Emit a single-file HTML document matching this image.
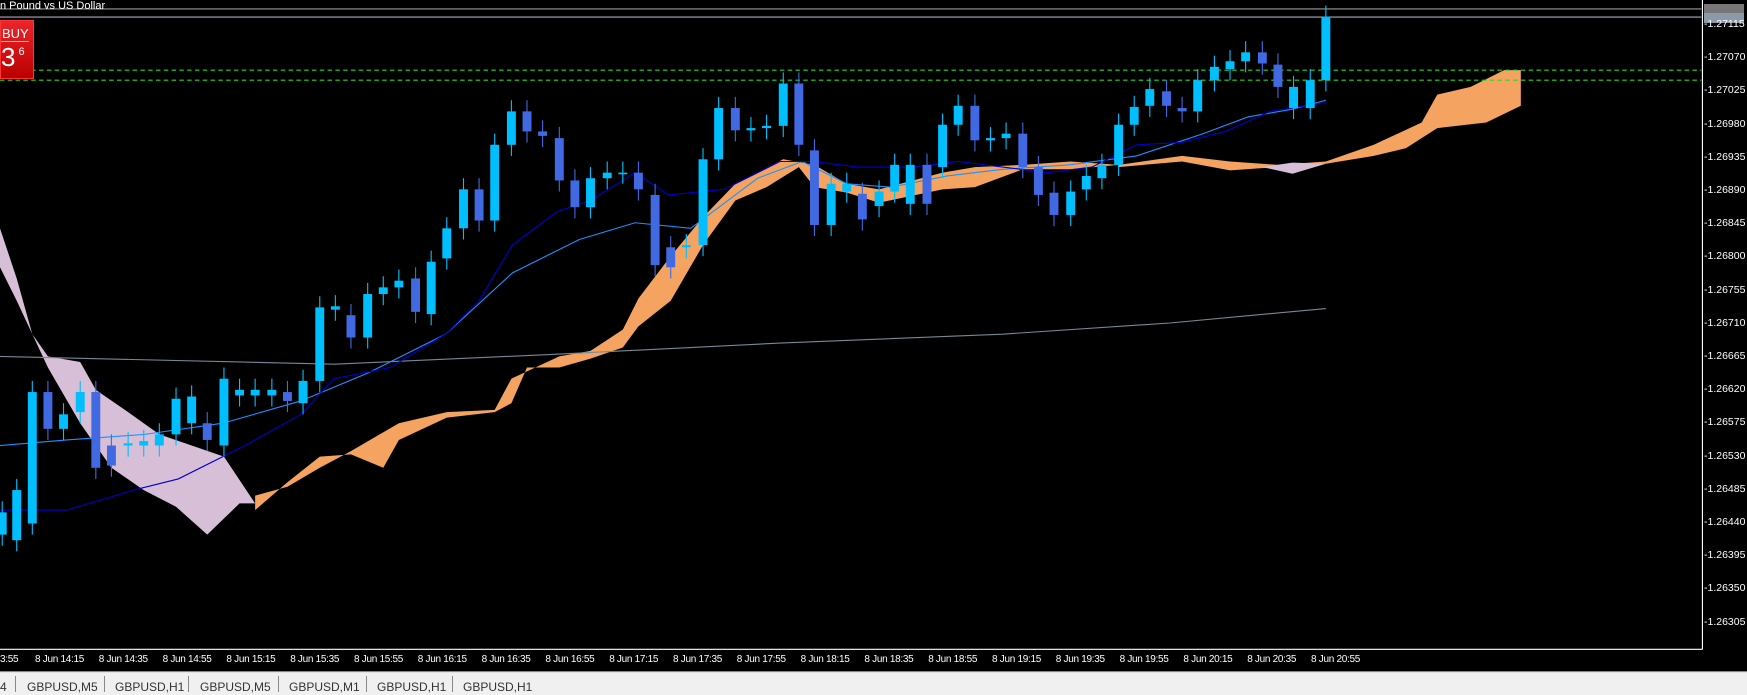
<!DOCTYPE html><html><head><style>
body{margin:0;width:1747px;height:695px;background:#000;overflow:hidden;position:relative;font-family:"Liberation Sans",sans-serif}
.t{position:absolute;color:#fff;font-size:10px;white-space:nowrap;letter-spacing:-0.3px}
.p{position:absolute;left:1704px;color:#fff;font-size:10.5px}
.tab{position:absolute;top:680px;font-size:12px;color:#333}
.sep{position:absolute;top:676px;width:1px;height:16px;background:#888}
</style></head><body>
<svg id="s" width="1747" height="695" viewBox="0 0 1568 624" preserveAspectRatio="none" style="position:absolute;left:0;top:0">
<polygon fill="#d8bfd8" points="0,205 15,250 29,300 43,320 72,325 86,350 115,370 143,390 172,400 201,410 229,452 215,452 186,480 158,455 129,440 100,420 72,380 43,330 15,270 0,240"/>
<polygon fill="#f4a460" points="229,445 258,437 287,420 315,405 358,380 401,370 444,368 459,340 502,320 530,315 559,296 573,268 602,230 631,195 660,165 703,143 731,148 760,165 789,170 846,155 875,150 918,148 961,145 1004,148 961,152 918,152 875,168 846,170 789,182 760,173 731,168 717,150 688,168 660,180 631,220 602,270 573,293 559,312 530,322 502,330 473,330 459,362 444,370 401,375 358,395 344,420 315,408 287,410 258,433 229,458"/>
<polygon fill="#f4a460" points="1004,148 1061,140 1104,145 1147,148 1190,145 1233,130 1276,110 1290,85 1320,78 1350,63 1365,63 1365,95 1334,110 1290,115 1262,133 1233,140 1190,147 1147,150 1104,153 1061,145 1004,150"/>
<polygon fill="#d8bfd8" points="1133,150 1160,146 1190,147 1160,156"/>
<polyline fill="none" stroke="#778899" stroke-width="1" points="0,320 300,327 500,318 700,308 900,300 1050,290 1190,277"/>
<polyline fill="none" stroke="#1e90ff" stroke-width="1" points="0,400 60,395 130,390 200,380 270,360 330,335 400,300 460,245 520,215 570,200 620,205 680,160 720,145 760,165 800,168 850,158 900,152 960,148 1020,140 1080,120 1120,105 1160,98 1190,90"/>
<polyline fill="none" stroke="#0000cd" stroke-width="1" points="0,458 60,458 120,440 160,430 220,400 270,372 300,340 350,330 400,300 430,270 460,220 500,190 530,180 570,155 600,175 650,170 700,145 730,145 770,150 820,150 860,145 900,150 940,155 980,150 1020,130 1060,128 1100,118 1140,100 1190,92"/>
<line x1="0" y1="8" x2="1527" y2="8" stroke="#999" stroke-width="1"/>
<line x1="0" y1="15.3" x2="1527" y2="15.3" stroke="#aab" stroke-width="1"/>
<line x1="0" y1="63" x2="1527" y2="63" stroke="#2d2" stroke-dasharray="4,3" stroke-width="1"/>
<line x1="0" y1="72" x2="1527" y2="72" stroke="#2d2" stroke-dasharray="4,3" stroke-width="1"/>
<g id="c"></g>
<line x1="1528" y1="0" x2="1528" y2="583" stroke="#fff"/>
<line x1="0" y1="583" x2="1528" y2="583" stroke="#fff"/>
<rect x="0" y="603" width="1568" height="21" fill="#f0f0f0"/>
<line x1="0" y1="603" x2="1568" y2="603" stroke="#888"/>
</svg>
<div style="position:absolute;left:0;top:0;color:#fff;font-size:11px">n Pound vs US Dollar</div>
<div style="position:absolute;left:0;top:20px;width:32px;height:57px;background:linear-gradient(#e8262b,#b00);border:1px solid #f33;color:#fff">
<div style="font-size:13px;padding-left:1px;border-bottom:1px solid #faa;margin:5px 4px 0 0">BUY</div>
<div style="font-size:26px;line-height:30px">3<sup style="font-size:11px;vertical-align:top;line-height:20px"> 6</sup></div></div>
<div style="position:absolute;left:1704px;top:4px;width:40px;height:11px;background:#777"></div>
<div style="position:absolute;left:1704px;top:13px;width:40px;height:10px;background:#8a9aa8"></div>
<div id="ax"></div><div id="tm"></div>
<div class="tab" style="left:0">4</div>
<div class="sep" style="left:15px"></div><div class="sep" style="left:104px"></div><div class="sep" style="left:188px"></div><div class="sep" style="left:278px"></div><div class="sep" style="left:366px"></div><div class="sep" style="left:452px"></div>
<div class="tab" style="left:27px">GBPUSD,M5</div><div class="tab" style="left:115px">GBPUSD,H1</div><div class="tab" style="left:200px">GBPUSD,M5</div><div class="tab" style="left:289px">GBPUSD,M1</div><div class="tab" style="left:377px">GBPUSD,H1</div><div class="tab" style="left:463px">GBPUSD,H1</div>
<script>
var ns="http://www.w3.org/2000/svg",g=document.getElementById('c');
var d=[[2,480,460],[15,485,440],[29,470,352],[43,352,385],[57,385,372],[72,370,352],[86,352,420],[100,400,418],[115,400,398],[129,400,396],[143,400,390],[158,390,358],[172,380,356],[186,380,395],[201,400,340],[215,355,350],[229,355,350],[244,355,350],[258,352,360],[272,362,342],[287,342,276],[301,278,275],[315,283,303],[330,303,264],[344,264,258],[358,258,252],[373,250,280],[387,282,235],[401,232,205],[416,205,170],[430,170,198],[444,198,130],[459,130,100],[473,100,118],[487,118,122],[502,124,162],[516,162,186],[530,186,160],[545,160,155],[559,155,155],[573,155,170],[588,175,238],[602,222,240],[616,222,220],[631,220,143],[645,143,97],[660,97,117],[674,117,115],[688,115,113],[703,113,75],[717,75,130],[731,135,202],[746,202,165],[760,172,165],[774,174,197],[789,185,172],[803,172,148],[817,183,148],[832,148,183],[846,150,112],[860,112,95],[875,95,126],[889,126,124],[903,124,120],[918,120,150],[932,150,175],[946,173,193],[961,193,172],[975,170,158],[989,160,148],[1004,148,112],[1018,112,96],[1032,95,80],[1047,82,95],[1061,97,100],[1075,100,72],[1090,72,60],[1104,62,55],[1118,55,47],[1133,47,57],[1147,58,78],[1161,97,78],[1176,97,72],[1190,72,15]];
d.forEach(function(c){var x=c[0],o=c[1],cl=c[2],bull=cl<=o,t=Math.min(o,cl),b=Math.max(o,cl),col=bull?"#00bfff":"#4169e1";
var l=document.createElementNS(ns,'line');l.setAttribute('x1',x);l.setAttribute('x2',x);l.setAttribute('y1',t-10);l.setAttribute('y2',b+10);l.setAttribute('stroke',col);g.appendChild(l);
var r=document.createElementNS(ns,'rect');r.setAttribute('x',x-4);r.setAttribute('width',8);r.setAttribute('y',t);r.setAttribute('height',Math.max(b-t,1.5));r.setAttribute('fill',col);g.appendChild(r);});
var ax=document.getElementById('ax'),h='';
for(var i=0;i<19;i++){var v=(1.27115-i*0.00045).toFixed(5);h+='<div class="p" style="top:'+(18+i*33.2)+'px">-'+v+'</div>';}
ax.innerHTML=h;
var tm=document.getElementById('tm'),s='<div class="t" style="left:0;top:654px">3:55</div>',hh=14,mm=15;
for(var k=0;k<21;k++){s+='<div class="t" style="left:'+(35+k*63.8)+'px;top:654px">8 Jun '+hh+':'+(mm<10?'0'+mm:mm)+'</div>';mm+=20;if(mm>=60){mm-=60;hh++;}}
tm.innerHTML=s;
</script>
</body></html>
